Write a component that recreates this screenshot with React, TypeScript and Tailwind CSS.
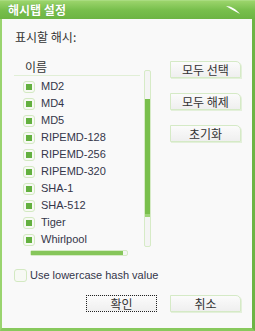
import React from 'react';

const HASHES = ['MD2', 'MD4', 'MD5', 'RIPEMD-128', 'RIPEMD-256', 'RIPEMD-320', 'SHA-1', 'SHA-512', 'Tiger', 'Whirlpool'];

const kr = { fontFamily: '"Noto Sans CJK KR", "Noto Sans", sans-serif' };
const latin = { fontFamily: '"Liberation Sans", Arial, sans-serif' };

const Check: React.FC<{ on?: boolean }> = ({ on }) => (
  <span className="w-[12px] h-[12px] rounded-[3px] border border-[#d3e9c2] bg-[#f7f9f4] flex items-center justify-center shrink-0">
    {on && <span className="w-[6px] h-[6px] bg-[#63b03f]" />}
  </span>
);

const SideButton: React.FC<{ label: string; dotted?: boolean; className?: string }> = ({ label, dotted, className }) => (
  <button
    style={kr}
    className={
      'h-[17px] w-[71px] text-[12px] leading-none text-[#333] bg-gradient-to-b from-[#fbfbfb] to-[#efefef] flex items-center justify-center ' +
      (dotted
        ? 'border border-dotted border-[#222] '
        : 'border border-[#d5eac6] rounded-tr-[5px] shadow-[1px_1px_0_#e3f0da] ') +
      (className ?? '')
    }
  >
    {label}
  </button>
);

export default function App() {
  return (
    <div className="w-[255px] h-[331px] flex flex-col bg-[#f9f9f9]">
      {/* title bar */}
      <div className="h-[19px] shrink-0 bg-gradient-to-b from-[#9bd46b] via-[#78bf4c] to-[#6cb443] border-t border-[#a9dc80] flex items-center justify-between pl-[8px] pr-[14px]">
        <span style={kr} className="text-white text-[12px] font-bold leading-none [text-shadow:0_0_1px_#5b9a35]">해시탭 설정</span>
        <svg width="16" height="10" viewBox="0 0 16 10">
          <path d="M1 1 C6 1 11 4 15 9 C10 6 5 4 1 1 Z" fill="#ffffff" />
        </svg>
      </div>

      {/* body */}
      <div className="flex-1 flex flex-col border-l-[2px] border-r-[3px] border-b-[3px] border-l-[#9ad46f] border-r-[#6db544] border-b-[#88c95d] bg-[#f9f9f9]">
        <div style={kr} className="mt-[10px] ml-[13px] text-[12px] leading-[16px] text-[#333]">표시할 해시:</div>

        <div className="flex mt-[13px]">
          {/* list */}
          <div className="ml-[12px] w-[140px] flex flex-col">
            <div className="flex">
              <div className="w-[126px] flex flex-col">
                <div style={kr} className="h-[18px] pl-[11px] text-[12px] leading-[18px] text-[#333] border-b border-[#e1efd6]">이름</div>
                <div className="flex flex-col pt-[2px]">
                  {HASHES.map((h) => (
                    <div key={h} className="h-[17px] flex items-center pl-[9px] gap-[6px]">
                      <Check on />
                      <span style={latin} className="text-[11px] leading-none text-[#34364a]">{h}</span>
                    </div>
                  ))}
                </div>
              </div>
              {/* vertical scrollbar */}
              <div className="ml-[4px] mt-[12px] w-[7px] h-[177px] border border-[#d6ebc6] rounded-[2px] bg-[#f4f4f4] flex flex-col">
                <div className="h-[28px]" />
                <div className="h-[118px] bg-[#79bf4c] border-b-[3px] border-[#9fd478]" />
              </div>
            </div>
            {/* horizontal scrollbar */}
            <div className="ml-[16px] mt-[2px] w-[98px] h-[6px] border border-[#d6ebc6] rounded-[2px] bg-[#f4f4f4] flex">
              <div className="flex-1 bg-[#86c65a] mr-[4px]" />
            </div>
          </div>

          {/* right buttons */}
          <div className="ml-[16px] flex flex-col gap-[15px] pt-[3px]">
            <SideButton label="모두 선택" />
            <SideButton label="모두 해제" />
            <SideButton label="초기화" />
          </div>
        </div>

        <div className="flex items-center gap-[3px] ml-[12px] mt-[13px]">
          <span className="w-[13px] h-[13px] rounded-[3px] border border-[#d3e9c2] bg-[#f7f9f4]" />
          <span style={latin} className="text-[11px] leading-none text-[#34364a]">Use lowercase hash value</span>
        </div>

        <div className="flex justify-end gap-[13px] mr-[11px] mt-[13px]">
          <SideButton label="확인" dotted />
          <SideButton label="취소" />
        </div>
      </div>
    </div>
  );
}
